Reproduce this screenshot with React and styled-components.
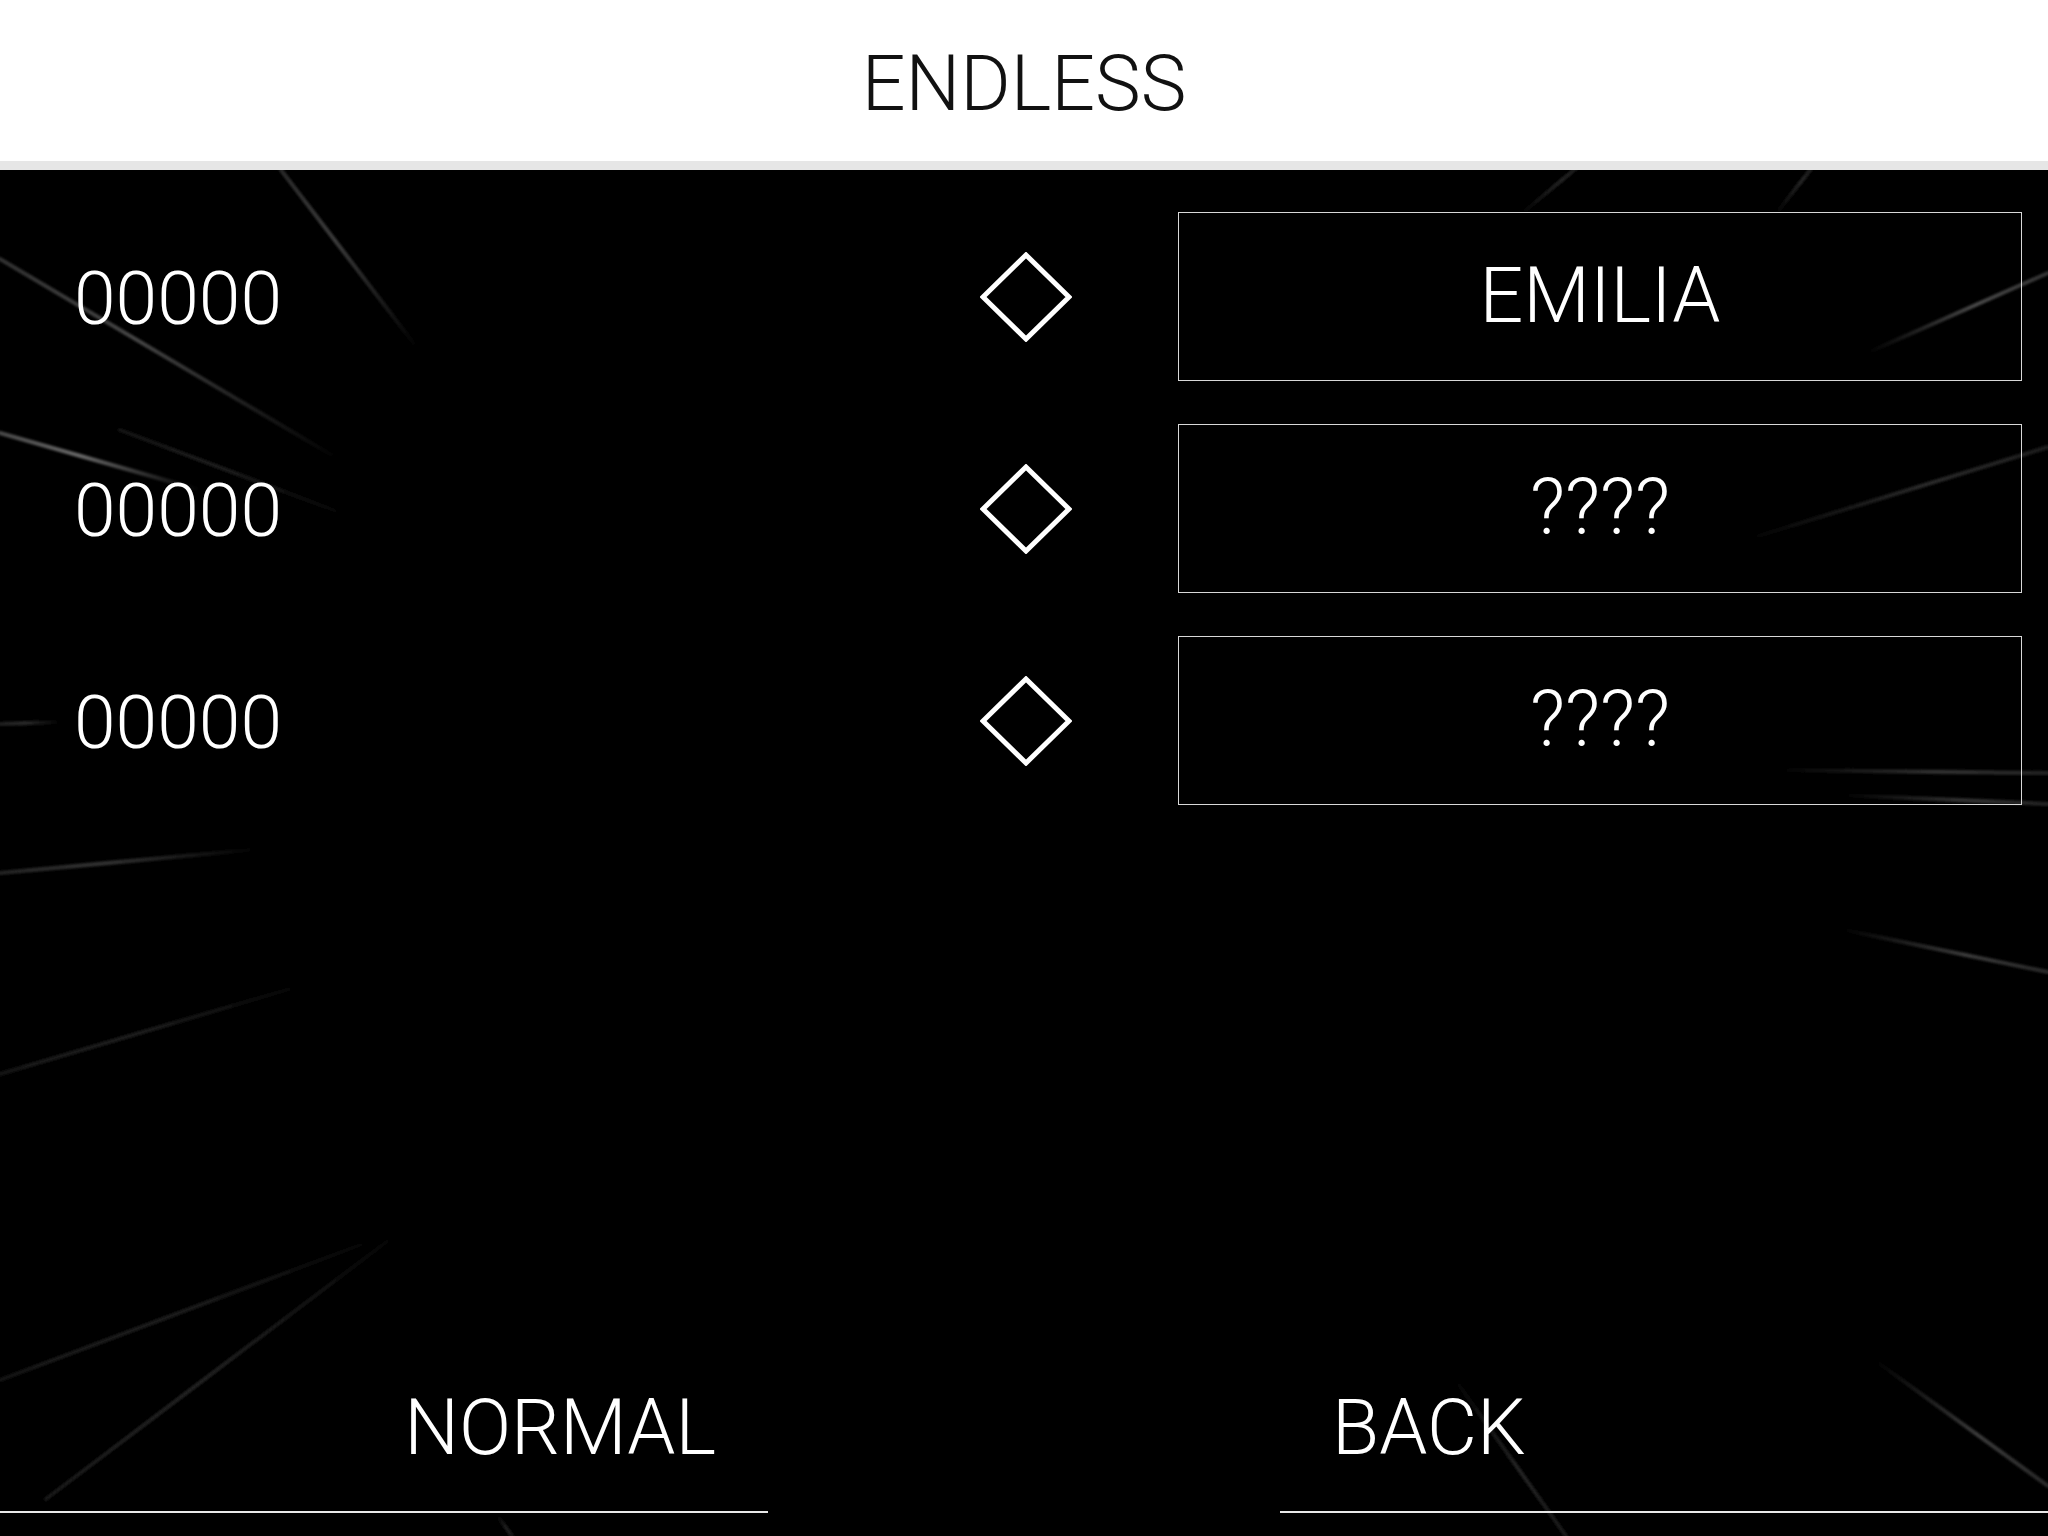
import React from 'react';
import styled, { createGlobalStyle } from 'styled-components';

// Page reset: black stage, no scrollbars, one sans family everywhere
const GlobalStyle = createGlobalStyle`
  html, body {
    margin: 0;
    padding: 0;
    background-color: #000;
    overflow: hidden;
  }

  body {
    font-family: Roboto, "Open Sans", "Liberation Sans", sans-serif;
    font-weight: 300;
  }
`;

const Screen = styled.div`
  width: 2048px;
  height: 1536px;
  display: flex;
  flex-direction: column;
  background-color: #000;
`;

// White title bar with a pale grey rule under it (161px white + 9px rule)
const TitleBar = styled.header`
  box-sizing: border-box;
  height: 170px;
  padding-top: 7px;
  display: flex;
  align-items: center;
  justify-content: center;
  background-color: #fff;
  border-bottom: 9px solid #e6e6e6;
`;

const Title = styled.h1`
  margin: 0;
  font-size: 77px;
  font-weight: 300;
  line-height: 1;
  color: #111;
`;

// Black play area, speed-line backdrop drawn behind the content
const Stage = styled.main`
  position: relative;
  flex: 1;
  display: flex;
  flex-direction: column;
  overflow: hidden;
`;

const Streaks = styled.svg`
  position: absolute;
  inset: 0;
  width: 100%;
  height: 100%;
  pointer-events: none;
`;

const RecordList = styled.div`
  position: relative;
  display: flex;
  flex-direction: column;
  gap: 43px;
  padding: 42px 26px 0 74px;
`;

const RecordRow = styled.div`
  display: grid;
  grid-template-columns: 1fr 92px 950px;
  align-items: center;
  height: 169px;
`;

const Score = styled.span`
  padding-top: 4px;
  font-size: 75px;
  line-height: 1;
  color: #fff;
`;

const Diamond = styled.svg`
  display: block;
  width: 92px;
  height: 90px;
`;

const NameBox = styled.div`
  justify-self: end;
  width: 842px;
  height: 167px;
  display: flex;
  align-items: center;
  justify-content: center;
  border: 1px solid #d8d8d8;
  font-size: 77px;
  line-height: 1;
  color: #fff;
`;

// Bottom menu: two underlined buttons with a gap in the middle
const MenuBar = styled.nav`
  position: relative;
  margin-top: auto;
  margin-bottom: 23px;
  display: grid;
  grid-template-columns: 768px 1fr 768px;
`;

const MenuButton = styled.div`
  grid-column: ${({ $side }) => ($side === 'left' ? 1 : 3)};
  display: flex;
  justify-content: ${({ $side }) => ($side === 'left' ? 'flex-end' : 'flex-start')};
  padding: 0 52px 44px;
  border-bottom: 2px solid #e8e8e8;
  font-size: 77px;
  line-height: 1;
  color: #fff;
`;

// Faint light streaks radiating from the middle of the stage (coords in stage space)
const streaks = [
  { x1: 418, y1: 179, x2: 281, y2: 0, c: '#3c3c3c' },
  { x1: 340, y1: 290, x2: 0, y2: 89, c: '#454545' },
  { x1: 360, y1: 350, x2: 120, y2: 260, c: '#1c1c1c' },
  { x1: 200, y1: 320, x2: 0, y2: 263, c: '#666' },
  { x1: 60, y1: 552, x2: 0, y2: 554, c: '#2a2a2a' },
  { x1: 261, y1: 679, x2: 0, y2: 703, c: '#333' },
  { x1: 320, y1: 810, x2: 0, y2: 904, c: '#1e1e1e' },
  { x1: 400, y1: 1060, x2: 0, y2: 1210, c: '#1e1e1e' },
  { x1: 418, y1: 1048, x2: 46, y2: 1329, c: '#232323' },
  { x1: 497, y1: 1345, x2: 512, y2: 1366, c: '#1e1e1e' },
  { x1: 1520, y1: 45, x2: 1586, y2: -10, c: '#222' },
  { x1: 1775, y1: 45, x2: 1818, y2: -10, c: '#222' },
  { x1: 1867, y1: 183, x2: 2048, y2: 103, c: '#484848' },
  { x1: 1742, y1: 371, x2: 2048, y2: 277, c: '#2a2a2a' },
  { x1: 1775, y1: 600, x2: 2048, y2: 603, c: '#333' },
  { x1: 1840, y1: 625, x2: 2048, y2: 634, c: '#333' },
  { x1: 1840, y1: 759, x2: 2048, y2: 802, c: '#3a3a3a' },
  { x1: 1873, y1: 1189, x2: 2048, y2: 1316, c: '#3a3a3a' },
  { x1: 1449, y1: 1201, x2: 1566, y2: 1366, c: '#222' },
];

const records = [
  { score: '00000', name: 'EMILIA' },
  { score: '00000', name: '????' },
  { score: '00000', name: '????' },
];

const SpeedLines = () => (
  <Streaks viewBox="0 0 2048 1366" preserveAspectRatio="none">
    <defs>
      <filter id="soft" x="-5%" y="-5%" width="110%" height="110%">
        <feGaussianBlur stdDeviation="1.3" />
      </filter>
      {streaks.map((s, i) => (
        <linearGradient
          key={i}
          id={`streak-${i}`}
          gradientUnits="userSpaceOnUse"
          x1={s.x1}
          y1={s.y1}
          x2={s.x2}
          y2={s.y2}
        >
          <stop offset="0" stopColor={s.c} stopOpacity="0" />
          <stop offset="0.6" stopColor={s.c} stopOpacity="1" />
          <stop offset="1" stopColor={s.c} stopOpacity="0.7" />
        </linearGradient>
      ))}
    </defs>
    <g filter="url(#soft)">
      {streaks.map((s, i) => (
        <line
          key={i}
          x1={s.x1}
          y1={s.y1}
          x2={s.x2}
          y2={s.y2}
          stroke={`url(#streak-${i})`}
          strokeWidth="4"
          strokeLinecap="round"
        />
      ))}
    </g>
  </Streaks>
);

const App = () => (
  <>
    <GlobalStyle />
    <Screen>
      <TitleBar>
        <Title>ENDLESS</Title>
      </TitleBar>
      <Stage>
        <SpeedLines />
        <RecordList>
          {records.map((r, i) => (
            <RecordRow key={i}>
              <Score>{r.score}</Score>
              <Diamond viewBox="0 0 92 90">
                <polygon
                  points="46,3 89,45 46,87 3,45"
                  fill="none"
                  stroke="#fff"
                  strokeWidth="5"
                />
              </Diamond>
              <NameBox>{r.name}</NameBox>
            </RecordRow>
          ))}
        </RecordList>
        <MenuBar>
          <MenuButton $side="left">NORMAL</MenuButton>
          <MenuButton $side="right">BACK</MenuButton>
        </MenuBar>
      </Stage>
    </Screen>
  </>
);

export default App;
